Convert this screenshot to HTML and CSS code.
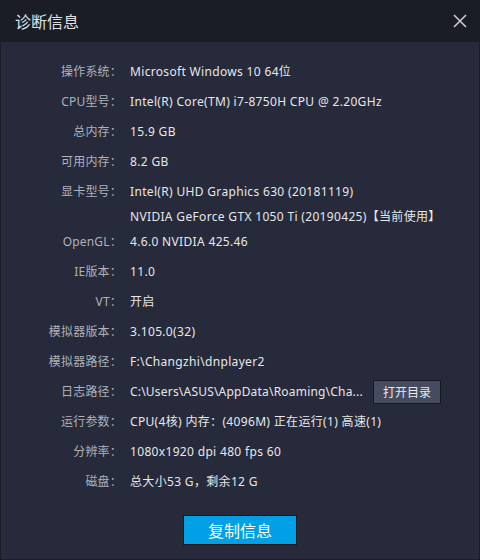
FILE: index.html
```html
<!DOCTYPE html>
<html lang="zh-CN">
<head>
<meta charset="utf-8">
<title>诊断信息</title>
<link rel="stylesheet" href="styles.css">
</head>
<body>
<div class="dialog">
  <header class="titlebar">
    <h1 class="title">诊断信息</h1>
    <button class="close" aria-label="关闭">
      <svg width="14" height="14" viewBox="0 0 14 14"><path d="M1 1L13 13M13 1L1 13" stroke="#c9cbd0" stroke-width="1.6" fill="none"/></svg>
    </button>
  </header>
  <main class="panel">
    <div class="rows">
      <div class="row"><span class="label">操作系统：</span><span class="value">Microsoft Windows 10 64位</span></div>
      <div class="row"><span class="label">CPU型号：</span><span class="value">Intel(R) Core(TM) i7-8750H CPU @ 2.20GHz</span></div>
      <div class="row"><span class="label">总内存：</span><span class="value">15.9 GB</span></div>
      <div class="row"><span class="label">可用内存：</span><span class="value">8.2 GB</span></div>
      <div class="row multi"><span class="label">显卡型号：</span><span class="value lines"><span>Intel(R) UHD Graphics 630 (20181119)</span><span>NVIDIA GeForce GTX 1050 Ti (20190425)【当前使用】</span></span></div>
      <div class="row"><span class="label">OpenGL：</span><span class="value">4.6.0 NVIDIA 425.46</span></div>
      <div class="row"><span class="label">IE版本：</span><span class="value">11.0</span></div>
      <div class="row"><span class="label">VT：</span><span class="value">开启</span></div>
      <div class="row"><span class="label">模拟器版本：</span><span class="value">3.105.0(32)</span></div>
      <div class="row"><span class="label">模拟器路径：</span><span class="value">F:\Changzhi\dnplayer2</span></div>
      <div class="row"><span class="label">日志路径：</span><span class="value path">C:\Users\ASUS\AppData\Roaming\Cha...</span><button class="open">打开目录</button></div>
      <div class="row"><span class="label">运行参数：</span><span class="value">CPU(4核) 内存：(4096M) 正在运行(1) 高速(1)</span></div>
      <div class="row"><span class="label">分辨率：</span><span class="value">1080x1920 dpi 480 fps 60</span></div>
      <div class="row"><span class="label">磁盘：</span><span class="value">总大小53 G，剩余12 G</span></div>
    </div>
    <div class="actions"><button class="copy">复制信息</button></div>
  </main>
</div>
</body>
</html>
```

FILE: styles.css
```css
* { box-sizing: border-box; }
html, body { margin: 0; padding: 0; }
body {
  width: 480px;
  height: 560px;
  background: #1a1d25;
  font-family: "Noto Sans", "Noto Sans CJK SC", sans-serif;
  font-size: 12px;
  color: #e4e5e8;
}
.dialog {
  width: 480px;
  height: 560px;
  display: flex;
  flex-direction: column;
  background: #1a1d25;
}
.titlebar {
  height: 42px;
  display: flex;
  align-items: center;
  justify-content: space-between;
  padding: 0 13px 0 15px;
}
.title {
  margin: 0;
  font-family: "Noto Sans CJK SC", sans-serif;
  font-size: 16px;
  font-weight: normal;
  color: #dfe1e5;
  line-height: 20px;
}
.close {
  background: none;
  border: 0;
  padding: 0;
  width: 14px;
  height: 14px;
  display: flex;
}
.panel {
  flex: 1;
  margin: 0 1px 1px;
  background: #262a3a;
  padding-top: 15px;
  display: flex;
  flex-direction: column;
}
.rows { display: flex; flex-direction: column; }
.row {
  display: flex;
  align-items: flex-start;
  padding: 5px 0;
  line-height: 20px;
}
.row.multi { padding-bottom: 0; }
.label {
  width: 121px;
  flex: none;
  text-align: right;
  color: #aeb2bc;
  letter-spacing: 0.2px;
}
.value {
  margin-left: 8px;
  white-space: nowrap;
  color: #e6e7ea;
  letter-spacing: 0.33px;
}
.value.path { letter-spacing: 0.2px; }
.lines { display: flex; flex-direction: column; gap: 5px; }
.open {
  margin: -2px 0 -2px 10px;
  height: 24px;
  padding: 0 9px;
  background: #464b5d;
  border: 1px solid #16181f;
  color: #e8e9ec;
  font-family: "Noto Sans CJK SC", sans-serif;
  font-size: 12px;
  line-height: 20px;
}
.actions {
  display: flex;
  justify-content: center;
  margin-top: 18px;
}
.copy {
  width: 114px;
  height: 30px;
  background: #00a0e6;
  border: 1px solid #14171e;
  color: #ffffff;
  font-family: "Noto Sans CJK SC", sans-serif;
  font-size: 16px;
  padding: 0;
}
```
